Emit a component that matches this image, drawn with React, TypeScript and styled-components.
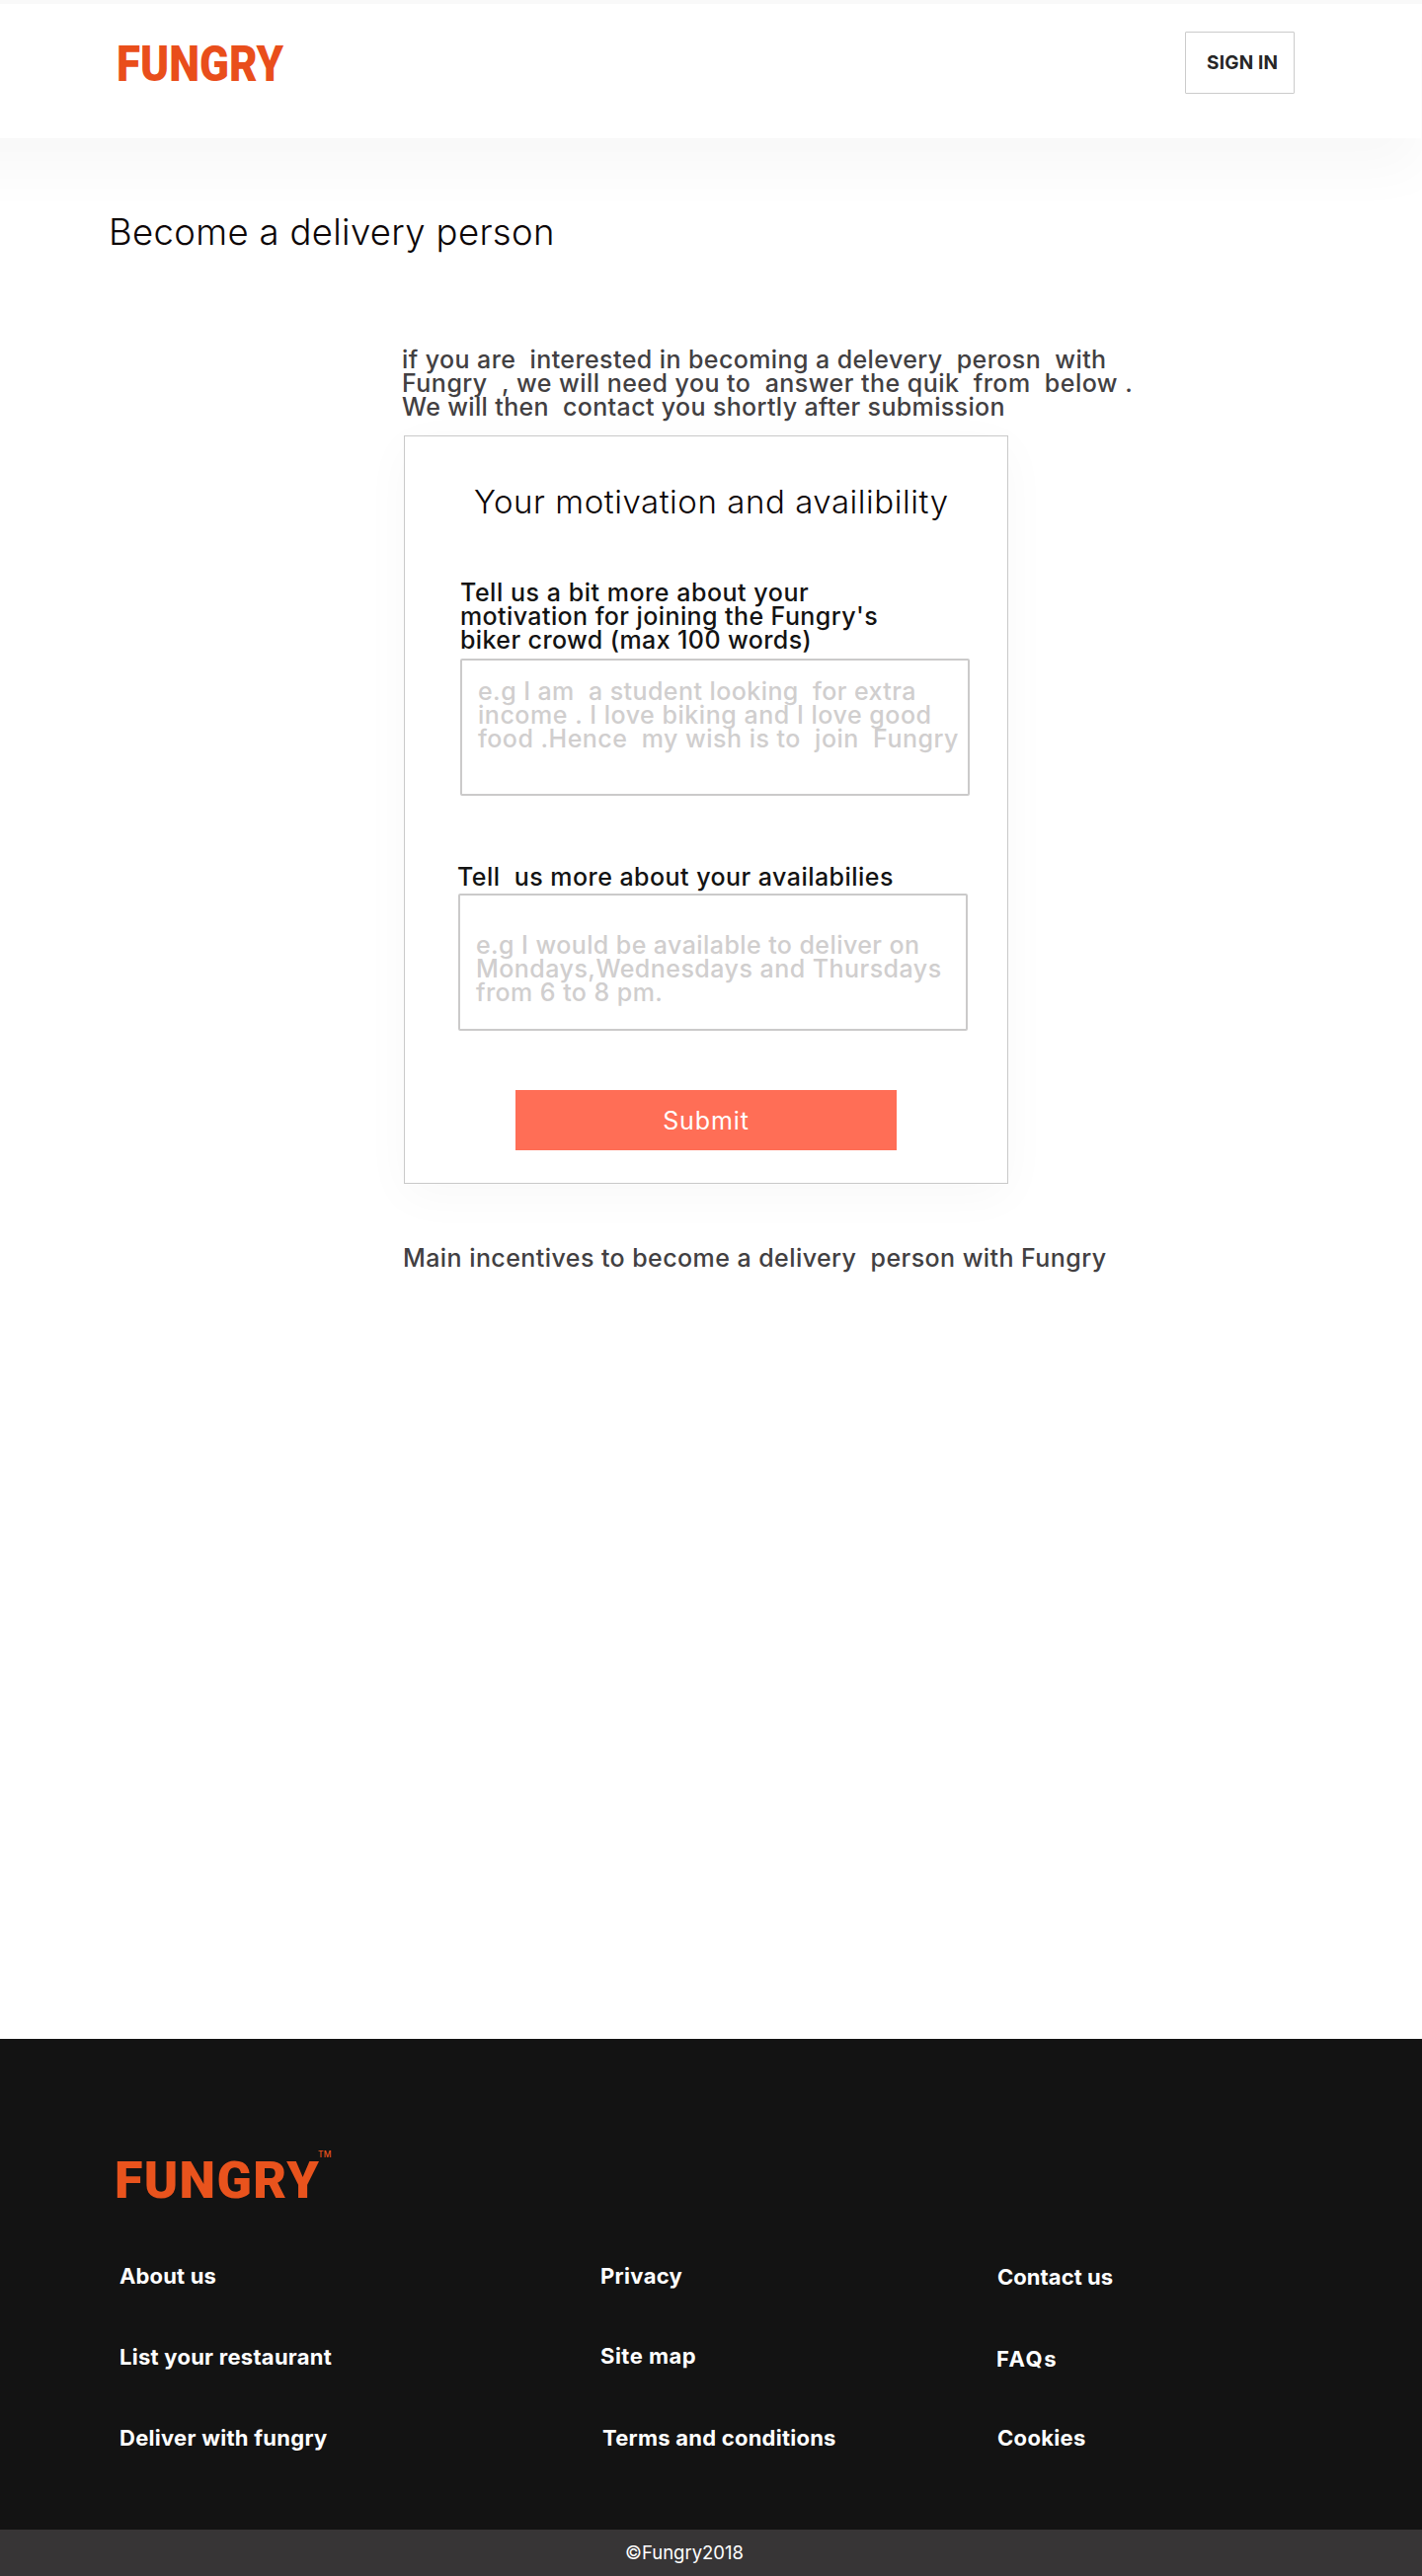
import React from "react";
import styled, { createGlobalStyle } from "styled-components";

const GlobalStyle = createGlobalStyle`
  *, *::before, *::after { box-sizing: border-box; }
  body {
    margin: 0;
    background: #fff;
    font-family: Inter, "Open Sans", sans-serif;
    overflow-x: hidden;
  }
`;

const Page = styled.div`
  display: flex;
  flex-direction: column;
  width: 1440px;
  height: 2609px;
  padding-top: 4px;
  background: linear-gradient(#f9f9f9 4px, #fff 4px);
  overflow: hidden;
`;

const Header = styled.header`
  display: flex;
  flex: none;
  justify-content: space-between;
  align-items: flex-start;
  width: 1539px;
  height: 136px;
  margin-left: -100px;
  padding: 28px 128px 0 218px;
  background: #fff;
  box-shadow: 0 32px 56px rgba(0, 0, 0, 0.033);
`;

const HeaderLogo = styled.a`
  margin-top: 8px;
  font: 900 49.2px/50px Roboto, sans-serif;
  color: #e94e1b;
  transform: scaleX(0.893);
  transform-origin: left;
`;

const SignIn = styled.button`
  width: 111px;
  height: 63px;
  padding: 1px 0 0 21px;
  border: 1px solid #cbcbcb;
  border-radius: 1px;
  background: #fff;
  color: #262626;
  font: 700 19px/60px Inter, sans-serif;
  letter-spacing: 0.2px;
  text-align: left;
  white-space: nowrap;
`;

const Main = styled.main`
  display: flex;
  flex: 1;
  flex-direction: column;
  align-items: flex-start;
  padding: 75px 0 0 109px;
`;

const Title = styled.h1`
  margin: 0 0 0 1px;
  font-size: 36.5px;
  font-weight: 300;
  line-height: 40px;
  letter-spacing: 0.33px;
  color: #0d0607;
`;

const Copy = styled.div<{ $top: number; $left?: number; $color?: string }>`
  display: flex;
  flex-direction: column;
  margin: ${(p) => p.$top}px 0 0 ${(p) => p.$left ?? 0}px;
  font-size: 25px;
  font-weight: 500;
  line-height: 24px;
  color: ${(p) => p.$color ?? "#131313"};
`;

const Line = styled.span<{ $track: number }>`
  letter-spacing: ${(p) => p.$track}px;
  white-space: pre;
`;

const Card = styled.form`
  display: flex;
  flex-direction: column;
  align-items: flex-start;
  width: 612px;
  height: 758px;
  margin: 17px 0 0 300px;
  padding-top: 46px;
  border: 1px solid #c9c9c9;
  background: #fff;
  box-shadow: 0 12px 46px rgba(0, 0, 0, 0.03);
`;

const CardTitle = styled.h2`
  margin: 0 0 0 70px;
  font-size: 33px;
  font-weight: 300;
  line-height: 40px;
  letter-spacing: 0.55px;
  color: #0d0607;
  white-space: nowrap;
`;

const Field = styled.div<{ $top: number; $left: number; $inset: number }>`
  width: 516px;
  height: 139px;
  margin: ${(p) => p.$top}px 0 0 ${(p) => p.$left}px;
  padding: ${(p) => p.$inset}px 0 0 16px;
  border: 2px solid #cbcaca;
  border-radius: 2px;
`;

const Submit = styled.button`
  width: 386px;
  height: 61px;
  margin: 60px 0 0 112px;
  padding: 1px 0 0;
  border: 0;
  background: #ff6e56;
  color: #fff;
  font: 400 25px/60px Inter, sans-serif;
  letter-spacing: 0.9px;
`;

const Footer = styled.footer`
  flex: none;
  height: 497px;
  padding: 114px 0 0 116px;
  background: #131313;
`;

const FooterBrand = styled.div`
  display: flex;
  align-items: flex-start;
  color: #e9531d;
`;

const FooterLogo = styled.span`
  font: 900 52px/60px Roboto, sans-serif;
  letter-spacing: 1.3px;
`;

const Trademark = styled.span`
  margin: -1px 0 0 -2px;
  font: 500 8.5px/8px Inter, sans-serif;
`;

const Links = styled.nav`
  display: grid;
  grid-template-columns: 488px 401px 300px;
  margin: 54px 0 0 4px;
`;

const LinkColumn = styled.div`
  display: flex;
  flex-direction: column;
  align-items: flex-start;
`;

const FooterLink = styled.a<{ $track: number; $top: number; $left: number }>`
  margin: ${(p) => p.$top}px 0 0 ${(p) => p.$left}px;
  font-size: 22px;
  font-weight: 700;
  line-height: 24px;
  letter-spacing: ${(p) => p.$track}px;
  color: #fff;
  white-space: nowrap;
`;

const Copyright = styled.div`
  flex: none;
  height: 47px;
  padding-left: 633px;
  background: #373536;
  color: #fff;
  font-size: 18.5px;
  line-height: 47px;
`;

type TextLine = [text: string, track: number];

const intro: TextLine[] = [
  ["if you are  interested in becoming a delevery  perosn  with", 0.41],
  ["Fungry  , we will need you to  answer the quik  from  below .", 0.47],
  ["We will then  contact you shortly after submission", 0.35],
];
const motivationLabel: TextLine[] = [
  ["Tell us a bit more about your", 0.53],
  ["motivation for joining the Fungry's", 0.41],
  ["biker crowd (max 100 words)", 0.4],
];
const motivationHint: TextLine[] = [
  ["e.g I am  a student looking  for extra", 0.43],
  ["income . I love biking and I love good", 0.53],
  ["food .Hence  my wish is to  join  Fungry", 0.48],
];
const availabilityLabel: TextLine[] = [["Tell  us more about your availabilies", 0.46]];
const availabilityHint: TextLine[] = [
  ["e.g I would be available to deliver on", 0.42],
  ["Mondays,Wednesdays and Thursdays", 0.47],
  ["from 6 to 8 pm.", 0.44],
];
const incentives: TextLine[] = [["Main incentives to become a delivery  person with Fungry", 0.43]];

const linkColumns: { label: string; track: number; top: number; left: number }[][] = [
  [
    { label: "About us", track: 0.15, top: 0, left: 1 },
    { label: "List your restaurant", track: 0.26, top: 58, left: 1 },
    { label: "Deliver with fungry", track: 0.28, top: 58, left: 1 },
  ],
  [
    { label: "Privacy", track: 0.33, top: 0, left: 0 },
    { label: "Site map", track: 0.48, top: 57, left: 0 },
    { label: "Terms and conditions", track: 0.24, top: 59, left: 2 },
  ],
  [
    { label: "Contact us", track: 0.05, top: 1, left: 1 },
    { label: "FAQs", track: 1.6, top: 59, left: 0 },
    { label: "Cookies", track: 0.32, top: 56, left: 1 },
  ],
];

const Lines = ({ of }: { of: TextLine[] }) => (
  <>
    {of.map(([text, track]) => (
      <Line key={text} $track={track}>
        {text}
      </Line>
    ))}
  </>
);

export default function App() {
  return (
    <Page>
      <GlobalStyle />
      <Header>
        <HeaderLogo>FUNGRY</HeaderLogo>
        <SignIn>SIGN IN</SignIn>
      </Header>
      <Main>
        <Title>Become a delivery person</Title>
        <Copy $top={97} $left={298} $color="#424042">
          <Lines of={intro} />
        </Copy>
        <Card>
          <CardTitle>Your motivation and availibility</CardTitle>
          <Copy $top={60} $left={56}>
            <Lines of={motivationLabel} />
          </Copy>
          <Field $top={7} $left={56} $inset={19}>
            <Copy $top={0} $color="#d0cece">
              <Lines of={motivationHint} />
            </Copy>
          </Field>
          <Copy $top={70} $left={53}>
            <Lines of={availabilityLabel} />
          </Copy>
          <Field $top={5} $left={54} $inset={38}>
            <Copy $top={0} $color="#d0cece">
              <Lines of={availabilityHint} />
            </Copy>
          </Field>
          <Submit type="button">Submit</Submit>
        </Card>
        <Copy $top={63} $left={299} $color="#424042">
          <Lines of={incentives} />
        </Copy>
      </Main>
      <Footer>
        <FooterBrand>
          <FooterLogo>FUNGRY</FooterLogo>
          <Trademark>TM</Trademark>
        </FooterBrand>
        <Links>
          {linkColumns.map((column) => (
            <LinkColumn key={column[0].label}>
              {column.map((link) => (
                <FooterLink key={link.label} $track={link.track} $top={link.top} $left={link.left}>
                  {link.label}
                </FooterLink>
              ))}
            </LinkColumn>
          ))}
        </Links>
      </Footer>
      <Copyright>©Fungry2018</Copyright>
    </Page>
  );
}
